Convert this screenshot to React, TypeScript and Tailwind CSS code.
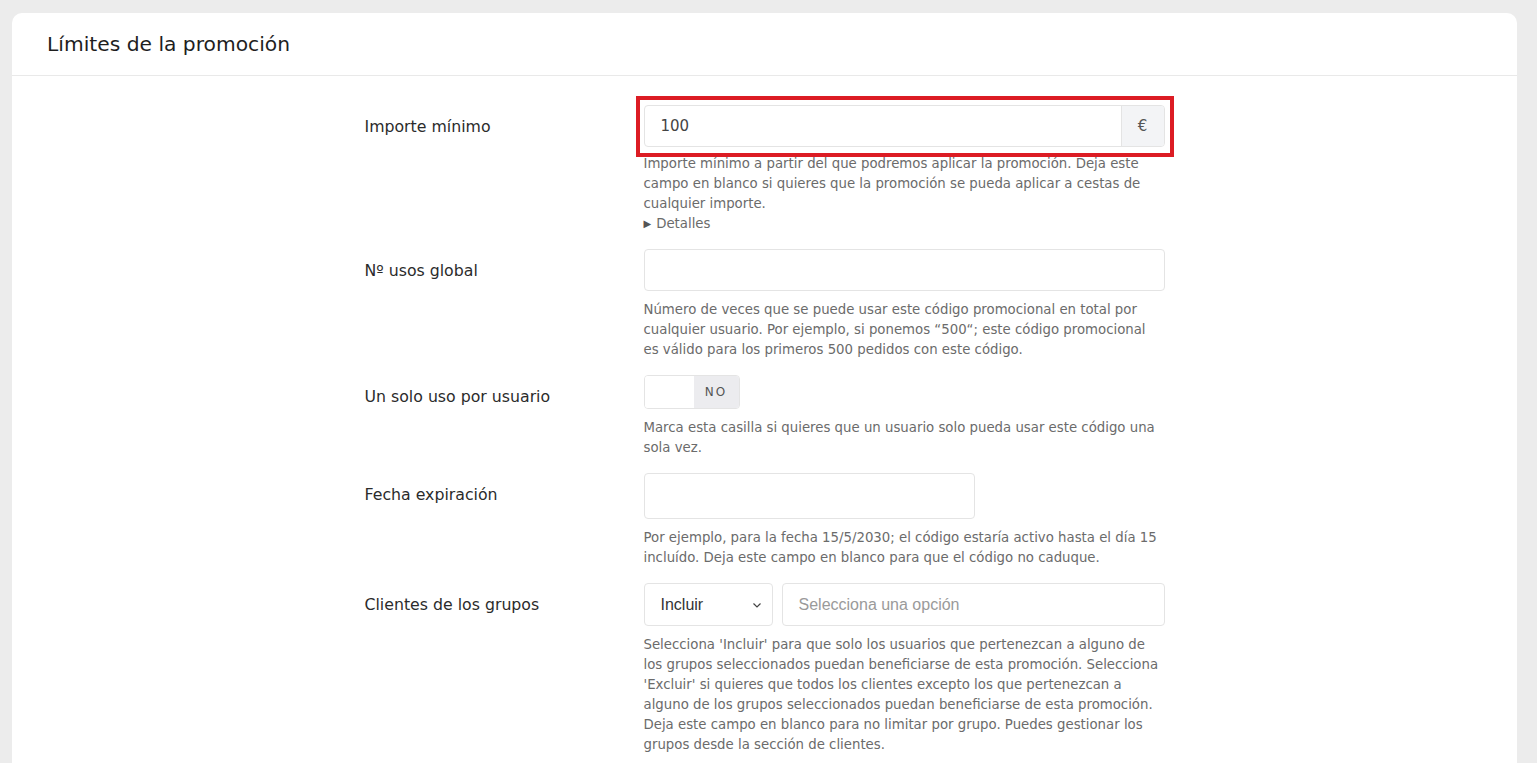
import { ReactNode } from 'react';

const sans = "font-['DejaVu_Sans',Verdana,sans-serif]";
const arial = "font-['Liberation_Sans',Arial,sans-serif]";

function Row({ label, children, help }: { label: string; children: ReactNode; help: ReactNode }) {
  return (
    <div className="flex mb-[15px]">
      <div className="w-[279px] shrink-0 pt-[1px] text-[15.75px] leading-[42px] text-[#2b2b2b]">{label}</div>
      <div className="w-[521px]">
        {children}
        <div className="mt-[9px] text-[13.3px] leading-[20px] text-[#6b6b6b]">{help}</div>
      </div>
    </div>
  );
}

export default function App() {
  return (
    <div className={`min-h-[763px] bg-[#ececec] pt-[13px] pl-[12px] pr-[20px] ${sans}`}>
      <div className="rounded-t-[10px] bg-white min-h-[750px]">
        <div className="h-[63px] flex items-center pl-[35px] pt-[1px] border-b border-[#e9e9e9]">
          <h2 className="text-[20.25px] text-[#1e1e1e]">Límites de la promoción</h2>
        </div>

        <div className="w-[800px] mx-auto pt-[29px]">
          <Row
            label="Importe mínimo"
            help={
              <>
                <div className="-mt-[2px]">
                  Importe mínimo a partir del que podremos aplicar la promoción. Deja este campo en blanco si quieres que la promoción se pueda aplicar a cestas de cualquier importe.
                </div>
                <div className="flex items-center gap-[5px] h-[20px]">
                  <span className="text-[10px] leading-[20px] text-[#555]">▶</span>
                  <span>Detalles</span>
                </div>
              </>
            }
          >
            <div className="relative">
              <div className="flex h-[42px] rounded-[4px] border border-[#e4e4e4] overflow-hidden">
                <div className="flex-1 flex items-center pl-[16px] text-[15px] text-[#444]">100</div>
                <div className="w-[43px] flex items-center justify-center bg-[#f3f4f6] border-l border-[#e4e4e4] text-[15px] text-[#555]">€</div>
              </div>
              <div className="absolute -left-[8px] -right-[9px] -top-[9px] -bottom-[10px] border-[4px] border-[#dc1c24] pointer-events-none" />
            </div>
          </Row>

          <Row
            label="Nº usos global"
            help="Número de veces que se puede usar este código promocional en total por cualquier usuario. Por ejemplo, si ponemos “500“; este código promocional es válido para los primeros 500 pedidos con este código."
          >
            <div className="h-[42px] rounded-[4px] border border-[#e4e4e4]" />
          </Row>

          <Row
            label="Un solo uso por usuario"
            help="Marca esta casilla si quieres que un usuario solo pueda usar este código una sola vez."
          >
            <div className="flex w-[96px] h-[34px] rounded-[4px] border border-[#e4e4e4] overflow-hidden">
              <div className="w-[49px] bg-white" />
              <div className="flex-1 flex items-center justify-center bg-[#ececef] text-[12px] tracking-[2px] text-[#555]">NO</div>
            </div>
          </Row>

          <Row
            label="Fecha expiración"
            help="Por ejemplo, para la fecha 15/5/2030; el código estaría activo hasta el día 15 incluído. Deja este campo en blanco para que el código no caduque."
          >
            <div className="w-[331px] h-[46px] rounded-[4px] border border-[#e4e4e4]" />
          </Row>

          <Row
            label="Clientes de los grupos"
            help="Selecciona 'Incluir' para que solo los usuarios que pertenezcan a alguno de los grupos seleccionados puedan beneficiarse de esta promoción. Selecciona 'Excluir' si quieres que todos los clientes excepto los que pertenezcan a alguno de los grupos seleccionados puedan beneficiarse de esta promoción. Deja este campo en blanco para no limitar por grupo. Puedes gestionar los grupos desde la sección de clientes."
          >
            <div className={`flex gap-[9px] h-[43px] ${arial}`}>
              <div className="w-[129px] flex items-center justify-between pl-[16px] pr-[10px] rounded-[4px] border border-[#e4e4e4] text-[16px] text-[#333]">
                <span>Incluir</span>
                <svg width="10" height="10" viewBox="0 0 10 10" fill="none" stroke="#444" strokeWidth="1.2">
                  <path d="M1.5 3.5 L5 7 L8.5 3.5" />
                </svg>
              </div>
              <div className="flex-1 flex items-center pl-[16px] rounded-[4px] border border-[#e4e4e4] text-[16px] text-[#9a9a9a]">
                Selecciona una opción
              </div>
            </div>
          </Row>
        </div>
      </div>
    </div>
  );
}
